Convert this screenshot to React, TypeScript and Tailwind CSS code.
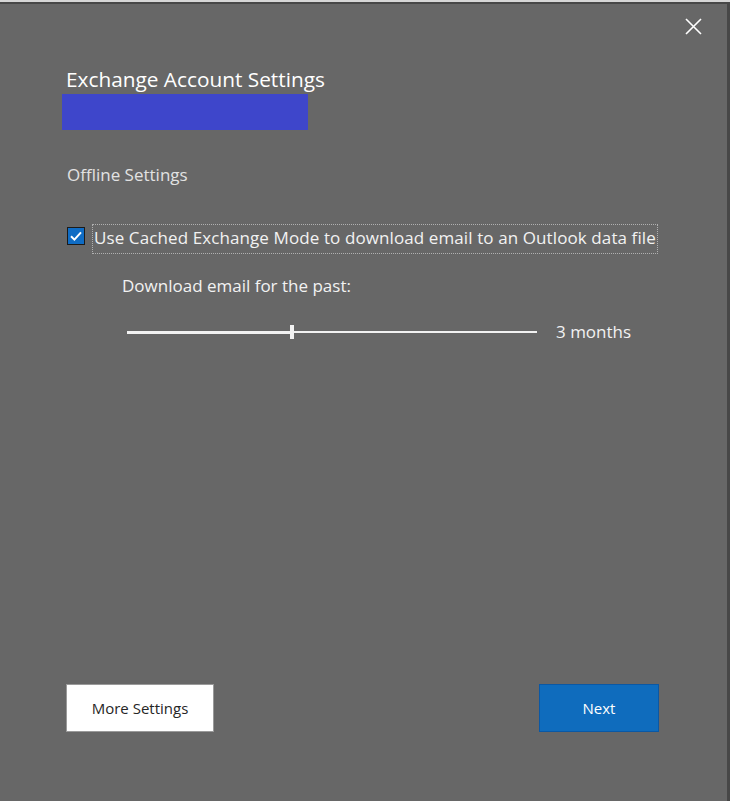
import { useState } from "react";

export default function App() {
  const [cached, setCached] = useState(true);

  return (
    <div
      className="w-[730px] h-[801px] bg-[#d6d6d6] pt-[2px] overflow-hidden"
      style={{ fontFamily: "'Open Sans', 'Noto Sans', sans-serif" }}
    >
      <div className="relative h-[799px] bg-[#676767] border-t-2 border-r-[3px] border-[#474747] flex flex-col">
        {/* close */}
        <button className="absolute right-[24px] top-[12px] w-[20px] h-[20px] flex items-center justify-center">
          <svg width="17" height="17" viewBox="0 0 17 17">
            <path d="M1 1 L16 16 M16 1 L1 16" stroke="#ffffff" strokeWidth="1.6" />
          </svg>
        </button>

        <div className="pl-[66px] pt-[61px] flex flex-col">
          <h1 className="text-[20.8px] leading-[28px] text-white">
            Exchange Account Settings
          </h1>
          <div className="ml-[-4px] mt-[1px] w-[246px] h-[36px] bg-[#3e46cb]" />

          <div className="mt-[34px] text-[17px] leading-[22px] text-[#e2e2e2] pl-[1px]">
            Offline Settings
          </div>

          <div className="mt-[38px] flex items-start">
            <button
              onClick={() => setCached(!cached)}
              className="mt-[3px] ml-[1px] w-[18px] h-[18px] bg-[#0f6cc4] border border-[#1b1b1b] flex items-center justify-center"
            >
              {cached && (
                <svg width="14" height="14" viewBox="0 0 14 14">
                  <path d="M2 7.2 L5.4 10.6 L12 3.4" fill="none" stroke="#ffffff" strokeWidth="2" />
                </svg>
              )}
            </button>
            <div className="ml-[7px] border border-dotted border-[#b0b0b0] px-[1px] pb-[3px] h-[30px] flex items-center text-[17px] text-[#f2f2f2] tracking-[0.1px]">
              Use Cached Exchange Mode to download email to an Outlook data file
            </div>
          </div>

          <div className="pl-[56px] mt-[21px] text-[17px] leading-[22px] text-[#f2f2f2]">
            Download email for the past:
          </div>

          <div className="pl-[61px] mt-[20px] flex items-center h-[30px]">
            <div className="relative w-[410px] h-[14px] flex items-center">
              <div className="w-[164px] h-[3px] bg-[#f2f2f2]" />
              <div className="flex-1 h-[2px] bg-[#f2f2f2]" />
              <div className="absolute left-[163px] top-0 w-[4px] h-[14px] bg-[#f2f2f2]" />
            </div>
            <span className="ml-[19px] text-[17px] text-[#f2f2f2]">3 months</span>
          </div>
        </div>

        <div className="mt-auto mb-[69px] pl-[66px] pr-[68px] flex justify-between">
          <button className="w-[148px] h-[48px] bg-white border border-[#9a9a9a] text-[15px] text-[#262626]">
            More Settings
          </button>
          <button className="w-[120px] h-[48px] bg-[#0f6cbd] border border-[#0b58a4] text-[15px] text-white">
            Next
          </button>
        </div>
      </div>
    </div>
  );
}
